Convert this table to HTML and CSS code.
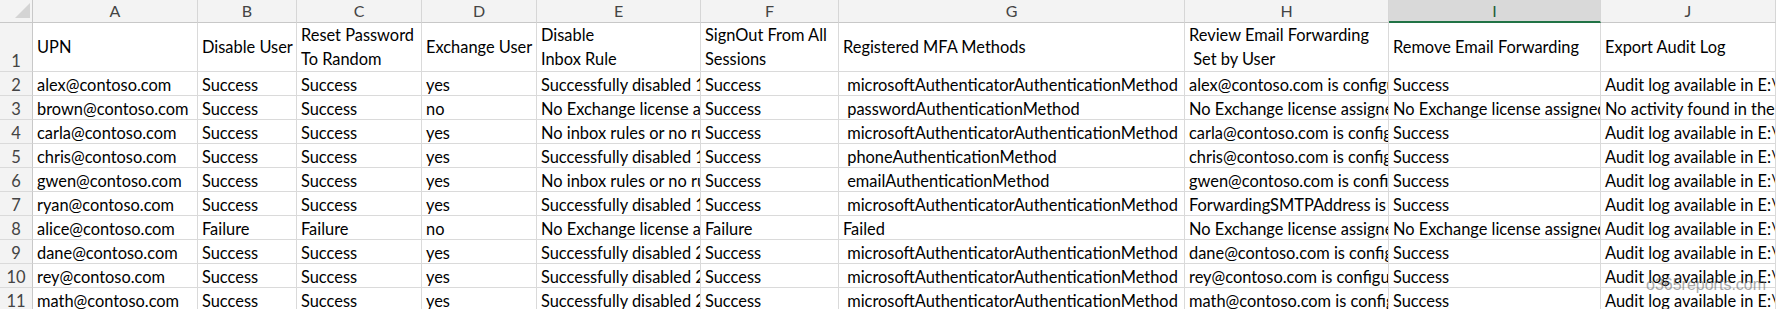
FILE: index.html
```html
<!DOCTYPE html>
<html>
<head>
<meta charset="utf-8">
<link rel="stylesheet" href="styles.css">
</head>
<body>
<div class="sheet">
  <div class="corner"><svg width="33" height="22" viewBox="0 0 33 22"><polygon points="15,18 30,18 30,3" fill="#d4d4d4"/></svg></div>
  <div class="hc">A</div><div class="hc">B</div><div class="hc">C</div><div class="hc">D</div><div class="hc">E</div><div class="hc">F</div><div class="hc">G</div><div class="hc">H</div><div class="hc sel">I</div><div class="hc">J</div>

  <div class="rh">1</div>
  <div class="c th">UPN</div><div class="c th">Disable User</div><div class="c th">Reset Password<br>To Random</div><div class="c th">Exchange User</div><div class="c th">Disable<br>Inbox Rule</div><div class="c th">SignOut From All<br>Sessions</div><div class="c th">Registered MFA Methods</div><div class="c th">Review Email Forwarding<br> Set by User</div><div class="c th">Remove Email Forwarding</div><div class="c th">Export Audit Log</div>

  <div class="rh">2</div>
  <div class="c">alex@contoso.com</div><div class="c">Success</div><div class="c">Success</div><div class="c">yes</div><div class="c">Successfully disabled 1 inbox rule(s)</div><div class="c">Success</div><div class="c"> microsoftAuthenticatorAuthenticationMethod</div><div class="c">alex@contoso.com is configured to forward emails</div><div class="c">Success</div><div class="c">Audit log available in E:\Users\Admin\AuditLogs</div>

  <div class="rh">3</div>
  <div class="c">brown@contoso.com</div><div class="c">Success</div><div class="c">Success</div><div class="c">no</div><div class="c">No Exchange license assigned</div><div class="c">Success</div><div class="c"> passwordAuthenticationMethod</div><div class="c">No Exchange license assigned</div><div class="c">No Exchange license assigned</div><div class="c">No activity found in the last 90 days</div>

  <div class="rh">4</div>
  <div class="c">carla@contoso.com</div><div class="c">Success</div><div class="c">Success</div><div class="c">yes</div><div class="c">No inbox rules or no rules to disable</div><div class="c">Success</div><div class="c"> microsoftAuthenticatorAuthenticationMethod</div><div class="c">carla@contoso.com is configured to forward emails</div><div class="c">Success</div><div class="c">Audit log available in E:\Users\Admin\AuditLogs</div>

  <div class="rh">5</div>
  <div class="c">chris@contoso.com</div><div class="c">Success</div><div class="c">Success</div><div class="c">yes</div><div class="c">Successfully disabled 1 inbox rule(s)</div><div class="c">Success</div><div class="c"> phoneAuthenticationMethod</div><div class="c">chris@contoso.com is configured to forward emails</div><div class="c">Success</div><div class="c">Audit log available in E:\Users\Admin\AuditLogs</div>

  <div class="rh">6</div>
  <div class="c">gwen@contoso.com</div><div class="c">Success</div><div class="c">Success</div><div class="c">yes</div><div class="c">No inbox rules or no rules to disable</div><div class="c">Success</div><div class="c"> emailAuthenticationMethod</div><div class="c">gwen@contoso.com is configured to forward emails</div><div class="c">Success</div><div class="c">Audit log available in E:\Users\Admin\AuditLogs</div>

  <div class="rh">7</div>
  <div class="c">ryan@contoso.com</div><div class="c">Success</div><div class="c">Success</div><div class="c">yes</div><div class="c">Successfully disabled 1 inbox rule(s)</div><div class="c">Success</div><div class="c"> microsoftAuthenticatorAuthenticationMethod</div><div class="c">ForwardingSMTPAddress is configured</div><div class="c">Success</div><div class="c">Audit log available in E:\Users\Admin\AuditLogs</div>

  <div class="rh">8</div>
  <div class="c">alice@contoso.com</div><div class="c">Failure</div><div class="c">Failure</div><div class="c">no</div><div class="c">No Exchange license assigned</div><div class="c">Failure</div><div class="c">Failed</div><div class="c">No Exchange license assigned</div><div class="c">No Exchange license assigned</div><div class="c">Audit log available in E:\Users\Admin\AuditLogs</div>

  <div class="rh">9</div>
  <div class="c">dane@contoso.com</div><div class="c">Success</div><div class="c">Success</div><div class="c">yes</div><div class="c">Successfully disabled 2 inbox rule(s)</div><div class="c">Success</div><div class="c"> microsoftAuthenticatorAuthenticationMethod</div><div class="c">dane@contoso.com is configured to forward emails</div><div class="c">Success</div><div class="c">Audit log available in E:\Users\Admin\AuditLogs</div>

  <div class="rh">10</div>
  <div class="c">rey@contoso.com</div><div class="c">Success</div><div class="c">Success</div><div class="c">yes</div><div class="c">Successfully disabled 2 inbox rule(s)</div><div class="c">Success</div><div class="c"> microsoftAuthenticatorAuthenticationMethod</div><div class="c">rey@contoso.com is configured to forward emails</div><div class="c">Success</div><div class="c">Audit log available in E:\Users\Admin\AuditLogs</div>

  <div class="rh">11</div>
  <div class="c">math@contoso.com</div><div class="c">Success</div><div class="c">Success</div><div class="c">yes</div><div class="c">Successfully disabled 2 inbox rule(s)</div><div class="c">Success</div><div class="c"> microsoftAuthenticatorAuthenticationMethod</div><div class="c">math@contoso.com is configured to forward emails</div><div class="c">Success</div><div class="c">Audit log available in E:\Users\Admin\AuditLogs</div>
</div>
<div class="watermark">o365reports.com</div>
</body>
</html>
```
FILE: styles.css
```css
html, body {
  margin: 0;
  padding: 0;
  background: #ffffff;
  overflow: hidden;
  width: 1776px;
  height: 309px;
}
body {
  position: relative;
  font-family: Lato, "Liberation Sans", sans-serif;
  color: #000000;
}
.sheet {
  display: grid;
  grid-template-columns: 33px 165px 99px 125px 115px 164px 138px 346px 204px 212px 175px;
  grid-template-rows: 23px 49px repeat(10, 24px);
  width: 1776px;
  overflow: hidden;
}
.corner {
  background: #f3f3f3;
  border-right: 1px solid #c8c8c8;
  border-bottom: 1px solid #c8c8c8;
  box-sizing: border-box;
}
.corner svg {
  display: block;
}
.hc {
  box-sizing: border-box;
  background: #f3f3f3;
  border-right: 1px solid #d6d6d6;
  border-bottom: 1px solid #c8c8c8;
  display: flex;
  align-items: center;
  justify-content: center;
  font-size: 16px;
  color: #444444;
  padding-bottom: 1px;
}
.hc.sel {
  background: #d9d9d9;
  color: #1e5e38;
  border-bottom: 2px solid #217346;
  padding-bottom: 0;
}
.rh {
  box-sizing: border-box;
  background: #f3f3f3;
  border-right: 1px solid #c8c8c8;
  border-bottom: 1px solid #dadada;
  display: flex;
  align-items: flex-end;
  justify-content: center;
  font-size: 16.5px;
  line-height: 20px;
  color: #444444;
}
.c {
  box-sizing: border-box;
  border-right: 1px solid #dadada;
  border-bottom: 1px solid #dadada;
  overflow: hidden;
  white-space: pre;
  font-size: 16.4px;
  line-height: 20px;
  padding-left: 4px;
  display: flex;
  align-items: flex-end;
}
.c.th {
  line-height: 24px;
  align-items: center;
}
.watermark {
  position: absolute;
  left: 1646px;
  top: 276px;
  font-family: "Liberation Sans", sans-serif;
  font-size: 16px;
  line-height: 18px;
  color: rgba(110, 110, 110, 0.6);
}
```
